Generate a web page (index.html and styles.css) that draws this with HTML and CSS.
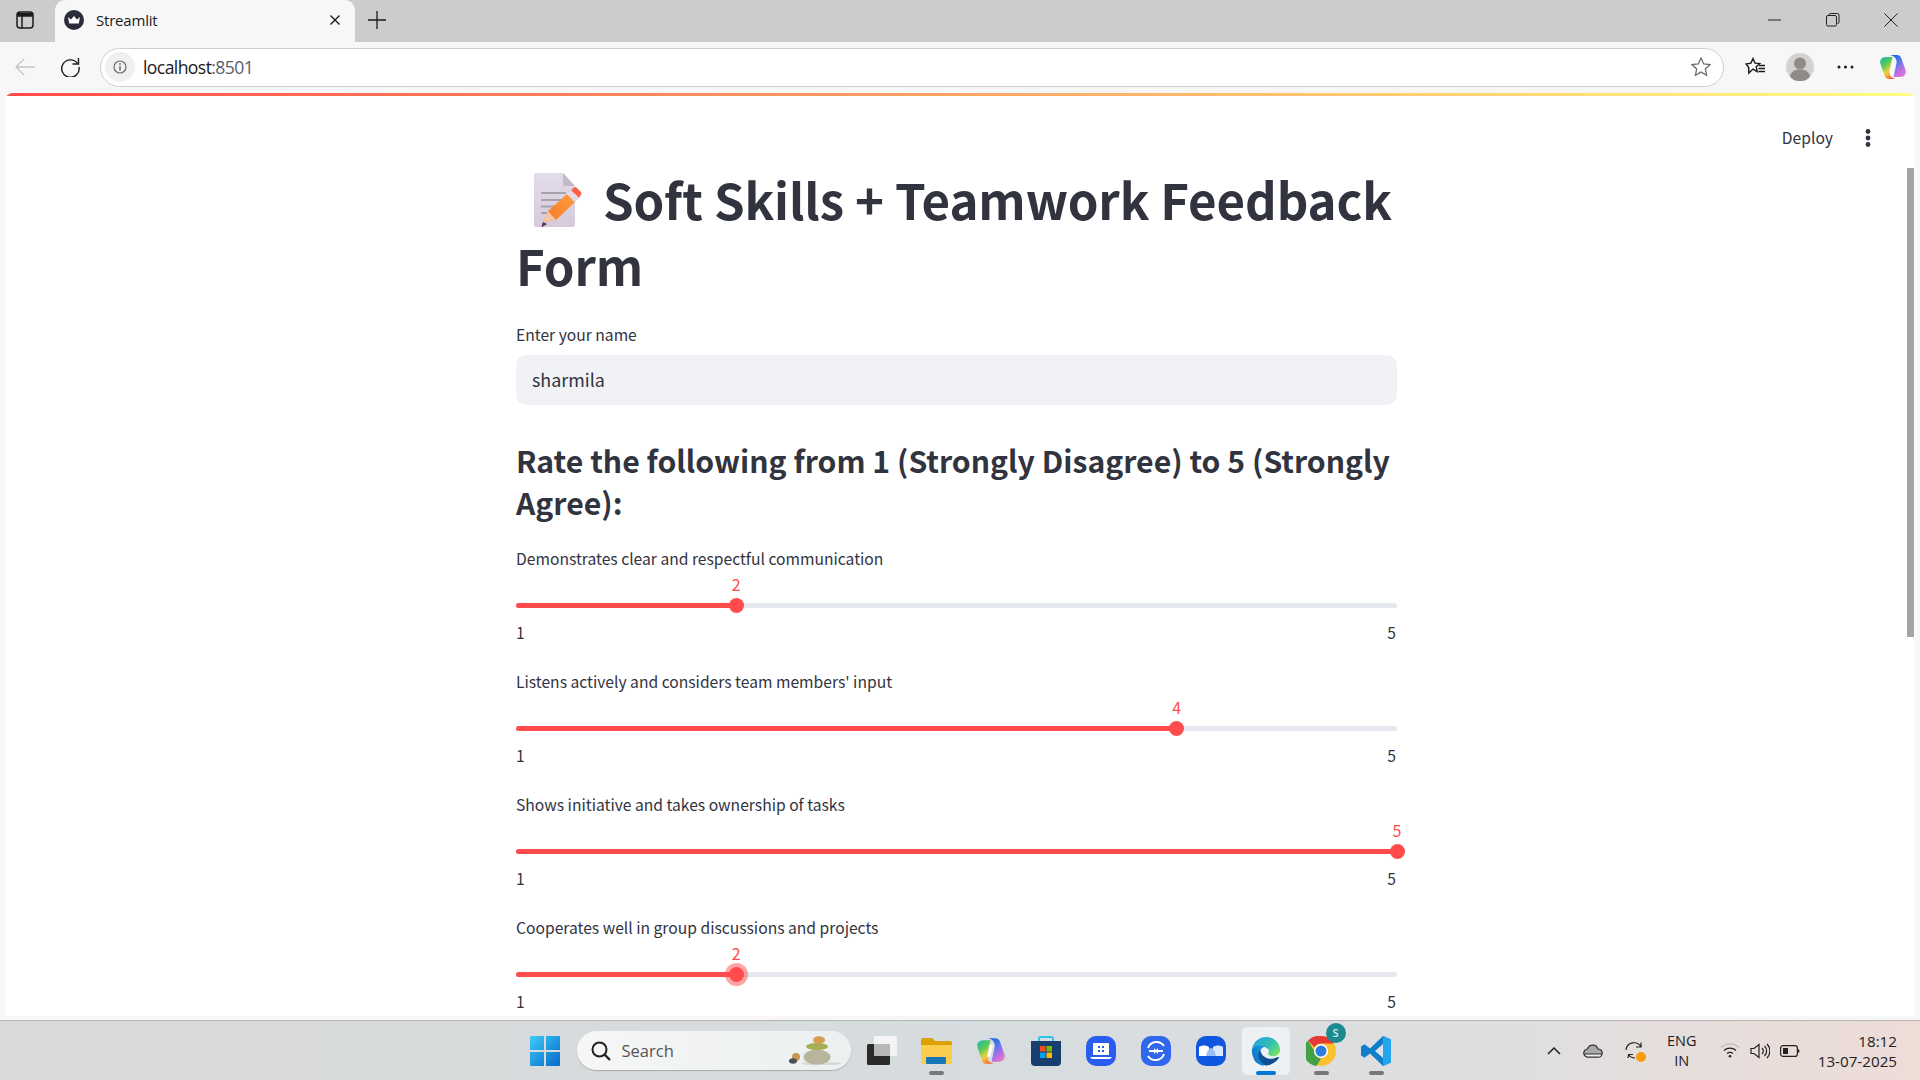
FILE: index.html
```html
<!DOCTYPE html>
<html lang="en">
<head>
<meta charset="utf-8">
<title>Streamlit</title>
<link rel="stylesheet" href="styles.css">
</head>
<body>
<svg class="defs" width="0" height="0"><defs>
  <linearGradient id="cpa" x1=".1" y1="0" x2=".7" y2="1"><stop offset="0" stop-color="#22b8a8"/><stop offset=".35" stop-color="#57c95a"/><stop offset=".65" stop-color="#f0d23a"/><stop offset="1" stop-color="#f4643c"/></linearGradient>
  <linearGradient id="cpb" x1=".2" y1="0" x2=".8" y2="1"><stop offset="0" stop-color="#0f6be0"/><stop offset=".4" stop-color="#5a78ee"/><stop offset=".7" stop-color="#b56ee6"/><stop offset="1" stop-color="#e77ac8"/></linearGradient>
</defs></svg>
<div class="window">
  <header class="tabstrip">
    <div class="tab-side">
      <svg width="18" height="18" viewBox="0 0 18 18" fill="none" stroke="#1a1a1a" stroke-width="1.5"><rect x="1" y="1" width="16" height="16" rx="3"/><path d="M1 5h16M6 5v12"/><path d="M2 2h14v3H2z" fill="#1a1a1a" stroke="none"/></svg>
    </div>
    <div class="tab">
      <svg class="favicon" width="20" height="20" viewBox="0 0 20 20"><circle cx="10" cy="10" r="10" fill="#2b2c3a"/><path d="M4 7l3 2.500L10 6l3 3.500L16 7l-1.200 6.500H5.200z" fill="#fff"/></svg>
      <span class="tab-title">Streamlit</span>
      <svg class="tab-close" width="10" height="10" viewBox="0 0 10 10" stroke="#1a1a1a" stroke-width="1.4"><path d="M.5.5l9 9M9.500.5l-9 9"/></svg>
    </div>
    <svg class="tab-plus" width="18" height="18" viewBox="0 0 18 18" stroke="#1a1a1a" stroke-width="1.3"><path d="M9 0v18M0 9h18"/></svg>
    <div class="win-controls">
      <svg width="14" height="14" viewBox="0 0 14 14" stroke="#222" stroke-width="1"><path d="M0 7h13"/></svg>
      <svg width="14" height="14" viewBox="0 0 14 14" fill="none" stroke="#222" stroke-width="1"><rect x=".5" y="2.500" width="10" height="10.500" rx="1.500"/><path d="M3 2.500V2A1.500 1.500 0 0 1 4.500.5h7A1.500 1.500 0 0 1 13 2v7a1.500 1.500 0 0 1-1.500 1.500"/></svg>
      <svg width="14" height="14" viewBox="0 0 14 14" stroke="#222" stroke-width="1"><path d="M.5.5l13 13M13.500.5l-13 13"/></svg>
    </div>
  </header>

  <nav class="toolbar">
    <svg class="tool-back" width="20" height="18" viewBox="0 0 20 18" fill="none" stroke="#c4c4c4" stroke-width="1.300"><path d="M20 9H1M9 1L1 9l8 8"/></svg>
    <svg class="tool-reload" width="20" height="20" viewBox="0 0 20 20" fill="none" stroke="#1c1c1c" stroke-width="1.400"><path d="M17.500 6.500A8.700 8.700 0 1 0 19 10"/><path d="M18.500 1v6h-6"/></svg>
    <div class="address">
      <span class="site-info"><svg width="14" height="14" viewBox="0 0 14 14" fill="none" stroke="#6b6b6b" stroke-width="1.200"><circle cx="7" cy="7" r="6"/><path d="M7 6v4.500" stroke-width="1.500"/><circle cx="7" cy="4" r=".9" fill="#6b6b6b" stroke="none"/></svg></span>
      <span class="url">localhost<span class="url-port">:8501</span></span>
      <svg class="addr-star" width="20" height="20" viewBox="0 0 20 20" fill="none" stroke="#6e6e6e" stroke-width="1.300"><path d="M10 1l2.700 5.900 6.400.7-4.800 4.300 1.300 6.300L10 15.100l-5.600 3.100 1.300-6.300L.9 7.600l6.400-.7z"/></svg>
    </div>
    <div class="tool-right">
      <svg width="21" height="20" viewBox="0 0 21 20" fill="none" stroke="#1a1a1a" stroke-width="1.400"><path d="M8 1.500l2 4.600 4.800.5-3.600 3.200 1 4.700-4.200-2.400-4.200 4-.1-5.600L1 7l4.900-.9z"/><path d="M14 8.500h6M13.500 11.500h6.500M13.500 14.500h6.500"/></svg>
      <svg class="avatar" width="28" height="28" viewBox="0 0 28 28"><circle cx="14" cy="14" r="14" fill="#d4d2cf"/><circle cx="14" cy="10.500" r="6" fill="#8f8b87"/><path d="M4 24c1-6 5-7.500 10-7.500S23 18 24 24a14 14 0 0 1-20 0z" fill="#8f8b87"/></svg>
      <svg class="more" width="17" height="4" viewBox="0 0 17 4" fill="#1a1a1a"><circle cx="2" cy="2" r="1.500"/><circle cx="8.500" cy="2" r="1.500"/><circle cx="15" cy="2" r="1.500"/></svg>
      <svg class="copilot" width="28" height="28" viewBox="0 0 28 28"><path d="M17 26h-7c-2 0-3.500-1-4.200-3L1.500 11C.3 7.500 2.500 4 6.500 4h7l-3 14c-.5 3 1 7 6.500 8z" fill="url(#cpa)"/><path d="M11 2h7c2 0 3.500 1 4.200 3l4.300 12c1.200 3.500-1 7-5 7h-7l3-14c.5-3-1-7-6.500-8z" fill="url(#cpb)"/></svg>
    </div>
  </nav>

  <main class="page">
    <div class="decoration"></div>
    <div class="app-header">
      <span class="deploy">Deploy</span>
      <svg width="6" height="18" viewBox="0 0 6 18" fill="#31333f"><circle cx="3" cy="2.500" r="2.400"/><circle cx="3" cy="9" r="2.400"/><circle cx="3" cy="15.500" r="2.400"/></svg>
    </div>
    <div class="scrollbar"></div>
    <div class="block">
      <h1 class="title"><svg class="memo" width="50" height="56" viewBox="0 0 50 56"><defs><linearGradient id="pg" x1="0" y1="0" x2="0" y2="1"><stop offset="0" stop-color="#e3dce9"/><stop offset="1" stop-color="#d4cadb"/></linearGradient><linearGradient id="pc" x1="1" y1="0" x2="0" y2="1"><stop offset="0" stop-color="#ff9a3d"/><stop offset="1" stop-color="#f57a28"/></linearGradient></defs><path d="M4 1h27l12 13v39a2 2 0 0 1-2 2H4a2 2 0 0 1-2-2V3a2 2 0 0 1 2-2z" fill="url(#pg)"/><path d="M31 1l12 13H33a2 2 0 0 1-2-2z" fill="#c3b9cb"/><path d="M9 21h25M9 28h25M9 34.500h18M9 41h13" stroke="#a8a2ad" stroke-width="2"/><path d="M11 50l5-11 19-17 8 8-19 18z" fill="url(#pc)"/><path d="M35 22l4-3.500 8 8-4 3.500z" fill="#e4dbe8"/><path d="M39 18l3-2.500a2 2 0 0 1 2.500 0l4.500 4.500a2 2 0 0 1 0 2.500L47 26z" fill="#ff6047"/><path d="M11 50l5-11 8 9z" fill="#f3c6a5"/><path d="M9.500 55l1.500-5 4 2-5 3z" fill="#5a2a55"/></svg><span class="title-text">Soft Skills + Teamwork Feedback Form</span></h1>

      <label class="field-label">Enter your name</label>
      <div class="text-input">sharmila</div>

      <h3 class="subhead">Rate the following from 1 (Strongly Disagree) to 5 (Strongly Agree):</h3>

      <section class="slider">
        <div class="slider-label">Demonstrates clear and respectful communication</div>
        <div class="track"><div class="fill" style="width:25%"></div><span class="thumb" style="left:25%"><span class="value">2</span></span></div>
        <div class="ticks"><span>1</span><span>5</span></div>
      </section>
      <section class="slider">
        <div class="slider-label">Listens actively and considers team members' input</div>
        <div class="track"><div class="fill" style="width:75%"></div><span class="thumb" style="left:75%"><span class="value">4</span></span></div>
        <div class="ticks"><span>1</span><span>5</span></div>
      </section>
      <section class="slider">
        <div class="slider-label">Shows initiative and takes ownership of tasks</div>
        <div class="track"><div class="fill" style="width:100%"></div><span class="thumb" style="left:100%"><span class="value">5</span></span></div>
        <div class="ticks"><span>1</span><span>5</span></div>
      </section>
      <section class="slider">
        <div class="slider-label">Cooperates well in group discussions and projects</div>
        <div class="track"><div class="fill" style="width:25%"></div><span class="thumb focus" style="left:25%"><span class="value">2</span></span></div>
        <div class="ticks"><span>1</span><span>5</span></div>
      </section>
    </div>
  </main>

  <footer class="taskbar">
    <div class="task-spacer"></div>
    <div class="task-center">
      <svg class="ti-start" width="30" height="30" viewBox="0 0 30 30"><defs><linearGradient id="ws" x1="0" y1="0" x2="1" y2="1"><stop offset="0" stop-color="#3ccbf8"/><stop offset="1" stop-color="#0669c9"/></linearGradient></defs><path d="M1 0h13v14H0V1a1 1 0 0 1 1-1zM16 0h13a1 1 0 0 1 1 1v13H16zM0 16h14v14H1a1 1 0 0 1-1-1zM16 16h14v13a1 1 0 0 1-1 1H16z" fill="url(#ws)"/></svg>
      <div class="search">
        <svg width="20" height="20" viewBox="0 0 20 20" fill="none" stroke="#222" stroke-width="2"><circle cx="8.500" cy="8.500" r="7"/><path d="M13.500 13.500L19 19" stroke-width="2.400"/></svg>
        <span class="search-text">Search</span>
        <svg class="stones" width="52" height="30" viewBox="0 0 52 30"><ellipse cx="32" cy="27.500" rx="20" ry="1.600" fill="#d8d8d2"/><circle cx="7" cy="21" r="4" fill="#c9964e"/><ellipse cx="4" cy="25" rx="4" ry="2.800" fill="#4d5057"/><ellipse cx="28" cy="21" rx="13.500" ry="7.500" fill="#b9b49e"/><ellipse cx="28" cy="10.500" rx="11" ry="3.600" fill="#a5ae52"/><ellipse cx="30" cy="4" rx="6" ry="3.800" fill="#d69c4f"/></svg>
      </div>
      <svg class="ti-task" width="30" height="30" viewBox="0 0 30 30"><rect x="7" y="0" width="23" height="20" rx="1.500" fill="#f4f4f4"/><rect x="0" y="8" width="23" height="21" rx="1.500" fill="#2b2b2b"/><rect x="7" y="8" width="16" height="12" fill="#b8b8b8"/></svg>
      <span class="app run"><svg width="31" height="28" viewBox="0 0 31 28"><path d="M0 3a2 2 0 0 1 2-2h9l3 3h15a2 2 0 0 1 2 2v3H0z" fill="#dca000"/><path d="M0 8h31v17a2 2 0 0 1-2 2H2a2 2 0 0 1-2-2z" fill="#fbcc4d"/><rect x="5" y="20" width="20" height="7" rx="1" fill="#1577b5"/></svg></span>
      <span class="app"><svg width="30" height="30" viewBox="0 0 28 28"><path d="M17 26h-7c-2 0-3.500-1-4.200-3L1.500 11C.3 7.500 2.500 4 6.500 4h7l-3 14c-.5 3 1 7 6.500 8z" fill="url(#cpa)"/><path d="M11 2h7c2 0 3.500 1 4.200 3l4.300 12c1.200 3.500-1 7-5 7h-7l3-14c.5-3-1-7-6.500-8z" fill="url(#cpb)"/><path d="M13 8l3 .5-2.500 11-3-.5z" fill="#fff"/></svg></span>
      <span class="app"><svg width="30" height="30" viewBox="0 0 30 30"><path d="M8 5V3a2 2 0 0 1 2-2h10a2 2 0 0 1 2 2v2" fill="none" stroke="#2ec4ea" stroke-width="2"/><path d="M0 5h30v21a4 4 0 0 1-4 4H4a4 4 0 0 1-4-4z" fill="#17406f"/><rect x="9" y="10" width="5.500" height="5.500" fill="#f25022"/><rect x="15.500" y="10" width="5.500" height="5.500" fill="#7fba00"/><rect x="9" y="16.500" width="5.500" height="5.500" fill="#00a4ef"/><rect x="15.500" y="16.500" width="5.500" height="5.500" fill="#ffb900"/></svg></span>
      <span class="app"><svg width="30" height="30" viewBox="0 0 30 30"><rect width="30" height="30" rx="10" fill="#2b5cf2"/><path d="M7 8a1 1 0 0 1 1-1h14a1 1 0 0 1 1 1v11H7z" fill="#fff"/><path d="M4 21h22l-2 2H6z" fill="#fff"/><g fill="#2b5cf2"><rect x="12" y="10" width="2" height="2"/><rect x="16" y="10" width="2" height="2"/><rect x="12" y="14" width="2" height="2"/><rect x="16" y="14" width="2" height="2"/></g></svg></span>
      <span class="app"><svg width="30" height="30" viewBox="0 0 30 30"><rect width="30" height="30" rx="10" fill="#2f68ee"/><g fill="none" stroke="#fff" stroke-width="2"><path d="M7 12a9 9 0 0 1 16-2"/><path d="M23 18a9 9 0 0 1-16 2"/><path d="M8 15h7M22 15h-7"/></g><path d="M13 12l3 3-3 3zM17 12v6l-3-3z" fill="#fff"/></svg></span>
      <span class="app"><svg width="30" height="30" viewBox="0 0 30 30"><rect width="30" height="30" rx="10" fill="#0f56e0"/><path d="M3 11c3-2 7-2 10 0v9H3z" fill="#fff"/><path d="M27 11c-3-2-7-2-10 0v9h10z" fill="#dbe8fb"/><path d="M10 20c1-5 3-8 5-8s4 3 5 8z" fill="#9cc0f5"/></svg></span>
      <span class="app active"><svg width="30" height="30" viewBox="0 0 31 31"><defs><linearGradient id="ea" x1="0" y1="0" x2="1" y2=".8"><stop offset="0" stop-color="#1b9de2"/><stop offset=".6" stop-color="#35c1b1"/><stop offset="1" stop-color="#7ee25f"/></linearGradient><linearGradient id="eb" x1="0" y1="0" x2="1" y2="1"><stop offset="0" stop-color="#0c59a4"/><stop offset="1" stop-color="#114a8b"/></linearGradient><linearGradient id="ec" x1="1" y1="0" x2="0" y2="1"><stop offset="0" stop-color="#1b9de2"/><stop offset="1" stop-color="#0a6fc2"/></linearGradient></defs><path d="M27 22c-.4.2-.9.4-1.300.6-1.500.6-3 .9-4.600.9-6 0-11.300-4.100-11.300-9.400 0-1.500.9-2.800 2.200-3.500-5.500.2-6.900 6-6.900 9.300 0 9.500 8.800 10.500 10.700 10.500 1 0 2.600-.3 3.600-.6l.2-.1c3.900-1.300 7.200-4 9.400-7.500.2-.3-.1-.6-.4-.5z" fill="url(#eb)"/><path d="M12.400 28.300c-1.200-.7-2.200-1.700-3-2.900-3-4-2.100-9.700 1.900-12.800.4-.3.900-.6 1.300-.8.300-.2.800-.4 1.400-.4.800 0 1.600.4 2.100 1 .3.4.5.9.5 1.400 0 0 2-6.500-6.500-6.500C6.500 7.300 3.500 10.600 1 13.700c-.5 3 .3 6 1.900 9.800 1.200 3.700 4.900 5.700 8.500 7 .9.300 1.800.5 2.700.6-.6-.3-1.200-.6-1.700-1z" fill="url(#ec)"/><path d="M1 13.500C2.200 6 8.700 1 15.800 1c4.700 0 9 2.100 11.700 5.900 1.600 2.300 2.500 5 2.500 7.600 0 3.700-2.900 6.500-6.800 6.500-2.300 0-4.300-.7-5.300-1.800-.3-.3-.3-.7 0-1 .3-.4.600-1 .6-1.900 0-3-3-6.500-8.300-6.500C5 9.800 1.800 13 1 13.500z" fill="url(#ea)"/></svg><span class="active-bar"></span></span>
      <span class="app run chrome"><svg width="30" height="30" viewBox="0 0 30 30"><circle cx="15" cy="15" r="15" fill="#fbc02d"/><path d="M15 0a15 15 0 0 1 13 7.500H15a7.500 7.500 0 0 0-6.500 3.800L2 4.500A15 15 0 0 1 15 0z" fill="#e53935"/><path d="M2 4.500l6.500 11A7.500 7.500 0 0 0 15 22.500L10.500 30A15 15 0 0 1 2 4.500z" fill="#43a047"/><circle cx="15" cy="15" r="7" fill="#fff"/><circle cx="15" cy="15" r="5.500" fill="#2f7ce0"/></svg><span class="badge">S</span></span>
      <span class="app run"><svg width="30" height="30" viewBox="0 0 30 30"><path d="M22 0l8 3.500v23L22 30 9 17.500l-5.500 4.200L0 19.500v-9L3.500 8.300 9 12.500z" fill="#0f7fcc"/><path d="M22 0l8 3.500v23L22 30z" fill="#24a6ef"/><path d="M22 8l-8 7 8 7z" fill="#dbe3e8"/></svg></span>
    </div>
    <div class="tray">
      <svg width="14" height="8" viewBox="0 0 14 8" fill="none" stroke="#222" stroke-width="1.500"><path d="M1 7l6-6 6 6"/></svg>
      <svg class="t-cloud" width="20" height="14" viewBox="0 0 20 14"><path d="M5 13a4 4 0 0 1-.5-8A5.500 5.500 0 0 1 15 5a3.800 3.800 0 0 1 .5 8z" fill="#a9a9a9" stroke="#333" stroke-width="1.200"/><path d="M1.500 10h17v1a2 2 0 0 1-2 2H4a3 3 0 0 1-2.500-3z" fill="#efefef" stroke="#333" stroke-width="1"/></svg>
      <span class="t-sync"><svg width="20" height="20" viewBox="0 0 20 20" fill="none" stroke="#222" stroke-width="1.200"><path d="M1 9a8 8 0 0 1 15-3M16 1.500V6h-5"/><path d="M3 17l.5-3.500H8M3.500 13.500C5 16 7 17 10 17"/></svg><span class="sync-dot"></span></span>
      <span class="lang">ENG<br>IN</span>
      <span class="t-net">
        <svg width="20" height="15" viewBox="0 0 20 15" fill="none" stroke="#222" stroke-width="1.300"><path d="M1 4.500a13 13 0 0 1 18 0" stroke="#bbb"/><path d="M4 7.500a9 9 0 0 1 12 0M7 10.500a5 5 0 0 1 6 0"/><circle cx="10" cy="13.200" r="1.300" fill="#222" stroke="none"/></svg>
        <svg width="20" height="16" viewBox="0 0 20 16" fill="none" stroke="#222" stroke-width="1.200"><path d="M1 5.500h3L9 1.500v13l-5-4H1z"/><path d="M12 5a4 4 0 0 1 0 6M14.500 3a7 7 0 0 1 0 10M17 1a10 10 0 0 1 0 14"/></svg>
        <svg width="20" height="12" viewBox="0 0 20 12" fill="none" stroke="#222" stroke-width="1.200"><rect x=".6" y=".6" width="16.800" height="10.800" rx="2.500"/><path d="M18.500 4.500v3" stroke-width="1.600"/><rect x="3" y="3" width="5" height="6" fill="#222" stroke="none"/></svg>
      </span>
      <span class="clock"><span>18:12</span><span>13-07-2025</span></span>
    </div>
  </footer>
</div>
</body>
</html>
```

FILE: styles.css
```css
* { box-sizing: border-box; }
html, body { margin: 0; height: 100%; overflow: hidden; }
body { font-family: "Noto Sans CJK SC", "Source Sans Pro", "Noto Sans", sans-serif; color: #31333f; }
svg { display: block; flex: none; }
.defs { position: absolute; }

.window { width: 1920px; height: 1080px; display: flex; flex-direction: column; background: #f7f7f7; overflow: hidden; }

/* browser chrome */
.tabstrip { height: 42px; flex: none; background: #cccccc; display: flex; align-items: center; padding-bottom: 2px; }
.tab-side { width: 55px; display: flex; justify-content: center; padding-right: 5px; }
.tab { width: 300px; height: 42px; margin-bottom: -2px; background: #f7f7f7; border-radius: 10px 10px 0 0; display: flex; align-items: center; padding: 0 15px 2px 9px; font: 15px "Open Sans", sans-serif; color: #1a1a1a; }
.tab-title { margin-left: 12px; flex: 1; letter-spacing: -.2px; }
.tab-plus { margin-left: 13px; }
.win-controls { margin-left: auto; display: flex; gap: 44px; padding-right: 22px; }
.win-controls svg { width: 14px; }

.toolbar { height: 51px; flex: none; display: flex; align-items: center; padding: 0 0 1px 15px; }
.tool-reload { margin-left: 25px; }
.address { flex: none; margin-left: 20px; width: 1624px; height: 39px; border: 1px solid #cfcfcf; border-radius: 20px; background: #fff; display: flex; align-items: center; padding: 0 10px 0 4px; }
.site-info { width: 30px; height: 30px; border-radius: 50%; background: #f0f0f0; display: flex; align-items: center; justify-content: center; }
.url { margin-left: 8px; flex: 1; font: 17.6px "Open Sans", sans-serif; letter-spacing: -.6px; color: #1a1a1a; }
.url-port { color: #555e6b; }
.addr-star { margin-right: 2px; }
.tool-right { margin-left: 21px; display: flex; align-items: center; }
.avatar { margin-left: 20px; }
.more { margin-left: 23px; }
.copilot { margin-left: 25px; }

/* page */
.page { position: relative; height: 923px; flex: none; margin: 0 5px; padding-right: 7px; background: #fff; border-radius: 8px 8px 0 0; overflow: hidden; }
.decoration { height: 3px; margin-right: -7px; background: linear-gradient(90deg, #ff4b4b, #fffd80); }
.app-header { position: absolute; top: 35px; right: 44px; display: flex; align-items: center; gap: 32px; }
.deploy { font-size: 15.65px; line-height: 20px; }
.scrollbar { position: absolute; top: 75px; right: 1px; width: 7px; height: 469px; background: #a3a3a3; }

.block { width: 881px; margin: 0 auto; padding-top: 70px; }
.title { margin: 0; font-size: 49.2px; line-height: 66px; font-weight: 700; letter-spacing: -.1px; }
.memo { display: inline-block; vertical-align: -8px; margin: 0 21px 0 16px; }
.title-text { display: inline; }

.field-label { display: block; margin-top: 25px; font-size: 15.65px; line-height: 24px; }
.text-input { margin-top: 8px; height: 50px; background: #f0f2f6; border-radius: 10px; padding: 0 16px; font-size: 17.9px; line-height: 48px; }

.subhead { margin: 15px 0 0; padding: 19px 0 1px; font-size: 30.2px; line-height: 42px; font-weight: 600; }

.slider { height: 123px; padding-top: 23px; }
.slider-label { font-size: 15.65px; line-height: 24px; }
.track { position: relative; height: 5px; margin-top: 32px; background: #e6e8ef; border-radius: 3px; }
.fill { height: 5px; background: #ff4b4b; border-radius: 3px; }
.thumb { position: absolute; top: 50%; width: 15px; height: 15px; margin: -7.5px 0 0 -7.5px; background: #ff4b4b; border-radius: 50%; }
.thumb.focus { box-shadow: 0 0 0 4px rgba(255, 75, 75, .5); }
.value { position: absolute; left: 50%; bottom: 19px; transform: translateX(-50%); font-size: 16px; line-height: 20px; color: #ff4b4b; }
.ticks { display: flex; justify-content: space-between; margin-top: 13px; font-size: 15.65px; line-height: 24px; padding-right: 1px; }

/* taskbar */
.taskbar { height: 60px; margin-top: 4px; flex: none; border-top: 1px solid #b5b5b5; background: linear-gradient(90deg, #d9d9d8 0%, #d6dcdf 50%, #e0dfdf 80%, #eedcd7 100%); display: grid; grid-template-columns: 1fr auto 1fr; align-items: center; font: 15px "Open Sans", sans-serif; color: #222; }
.task-center { display: flex; align-items: center; padding-left: 13px; }
.ti-start { margin-right: 17px; }
.search { width: 274px; height: 39px; border-radius: 20px; background: linear-gradient(90deg, #f6f6f6, #ecf0f0); box-shadow: 0 1px 1px #a9a9a9; display: flex; align-items: center; padding: 0 10px 0 14px; margin-right: 16px; }
.search-text { flex: 1; margin-left: 11px; font-size: 16.5px; color: #555; }
.ti-task { margin-right: 12px; }
.app { position: relative; width: 55px; height: 48px; display: flex; align-items: center; justify-content: center; border-radius: 5px; }
.app.run::after { content: ""; position: absolute; left: 20px; right: 20px; bottom: 0; height: 4px; border-radius: 2px; background: #777; }
.app.active { background: #edf1f4; width: 48px; margin: 0 4px 0 3px; }
.active-bar { position: absolute; left: 14px; right: 14px; bottom: 0; height: 4px; border-radius: 2px; background: #0078d4; }
.badge { position: absolute; top: -4px; right: 3px; width: 20px; height: 20px; border-radius: 50%; background: #1b8a8f; color: #d8efef; font-size: 11px; font-weight: 600; line-height: 20px; text-align: center; }
.tray { display: flex; align-items: center; justify-content: flex-end; padding-right: 23px; }
.tray > svg:first-child { margin-right: 22px; }
.t-cloud { margin-right: 22px; }
.t-sync { position: relative; margin-right: 19px; }
.sync-dot { position: absolute; right: -1px; bottom: -1px; width: 10px; height: 10px; border-radius: 50%; background: #f99b0a; }
.lang { width: 36px; text-align: center; font-size: 14.5px; line-height: 20px; margin-right: 20px; }
.t-net { display: flex; align-items: center; gap: 10px; margin-right: 18px; }
.clock { display: flex; flex-direction: column; align-items: flex-end; font-size: 15.2px; line-height: 20px; }
```
